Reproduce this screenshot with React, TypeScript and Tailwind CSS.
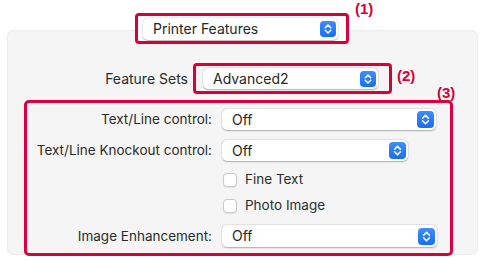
import React from 'react'

const RED = 'border-[#d8003a]'

function Stepper({ size = 17 }: { size?: number }) {
  return (
    <svg width={size} height={size} viewBox="0 0 17 17" className="shrink-0">
      <defs>
        <linearGradient id="stepGrad" x1="0" y1="0" x2="0" y2="1">
          <stop offset="0" stopColor="#3f8efc" />
          <stop offset="1" stopColor="#1a6ef2" />
        </linearGradient>
      </defs>
      <rect x="0" y="0" width="17" height="17" rx="4" fill="url(#stepGrad)" />
      <path d="M5.6 7.2 L8.5 4.3 L11.4 7.2" fill="none" stroke="#fff" strokeWidth="1.6" strokeLinecap="round" strokeLinejoin="round" />
      <path d="M5.6 9.8 L8.5 12.7 L11.4 9.8" fill="none" stroke="#fff" strokeWidth="1.6" strokeLinecap="round" strokeLinejoin="round" />
    </svg>
  )
}

function Popup({ label, className = '', iconSize = 17 }: { label: string; className?: string; iconSize?: number }) {
  return (
    <div
      className={`flex items-center justify-between bg-white rounded-[5px] pl-[10px] pr-[2px] shadow-[0_0.5px_1.5px_rgba(0,0,0,0.28),0_0_0_0.5px_rgba(0,0,0,0.06)] ${className}`}
    >
      <span className="text-[14px] text-[#262626] leading-none">{label}</span>
      <Stepper size={iconSize} />
    </div>
  )
}

function Callout({ children, className = '' }: { children: React.ReactNode; className?: string }) {
  return (
    <span className={`font-['Liberation_Sans',Arial,sans-serif] font-bold text-[15px] leading-none text-[#d8003a] ${className}`}>
      {children}
    </span>
  )
}

function Checkbox({ label }: { label: string }) {
  return (
    <div className="flex items-center h-[15px] ml-[196px]">
      <div className="w-[14px] h-[14px] bg-white rounded-[4px] border border-[#c9c9c9] shadow-[0_0.5px_1px_rgba(0,0,0,0.08)]" />
      <span className="ml-[8px] text-[13.5px] text-[#2e2e2e] leading-none">{label}</span>
    </div>
  )
}

export default function App() {
  return (
    <div className="w-[492px] h-[261px] bg-white overflow-hidden font-['Inter',sans-serif]">
      {/* preset popup */}
      <div className="relative z-10 flex items-start pt-[13px] pl-[135px]">
        <div className={`w-[214px] h-[31px] border-[3px] ${RED} rounded-[4px] bg-white flex items-center pl-[5px] pr-[8px]`}>
          <Popup label="Printer Features" className="w-full h-[22px]" iconSize={16} />
        </div>
        <Callout className="ml-[6px] -mt-[12px]">(1)</Callout>
      </div>

      {/* panel */}
      <div className="-mt-[14px] ml-[7px] w-[471px] h-[225px] bg-[#f5f5f5] rounded-[6px] border border-[#ebebeb]">
        <div className="flex items-start mt-[32px]">
          <div className="w-[180px] h-[31px] flex items-center justify-end text-[14px] text-[#2b2b2b]">Feature Sets</div>
          <div className={`ml-[5px] w-[199px] h-[31px] border-[3px] ${RED} rounded-[4px] flex items-center pl-[7px] pr-[11px]`}>
            <Popup label="Advanced2" className="w-full h-[21px]" iconSize={16} />
          </div>
          <Callout className="ml-[5px] mt-[5px]">(2)</Callout>
        </div>

        <div className={`relative ml-[16px] mt-[6px] w-[429px] h-[156px] border-[3px] ${RED} rounded-[5px]`}>
          <Callout className="absolute left-[410px] -top-[18px]">(3)</Callout>
          <div className="flex items-center mt-[6px]">
            <div className="w-[185px] text-right text-[13.5px] text-[#2b2b2b]">Text/Line control:</div>
            <Popup label="Off" className="ml-[10px] w-[214px] h-[21px]" />
          </div>
          <div className="flex items-center mt-[10px]">
            <div className="w-[185px] text-right text-[13.5px] text-[#2b2b2b]">Text/Line Knockout control:</div>
            <Popup label="Off" className="ml-[10px] w-[186px] h-[21px]" />
          </div>
          <div className="mt-[11px]">
            <Checkbox label="Fine Text" />
          </div>
          <div className="mt-[11px]">
            <Checkbox label="Photo Image" />
          </div>
          <div className="flex items-center mt-[12px]">
            <div className="w-[185px] text-right text-[13.5px] text-[#2b2b2b]">Image Enhancement:</div>
            <Popup label="Off" className="ml-[10px] w-[215px] h-[22px]" />
          </div>
        </div>
      </div>
    </div>
  )
}
